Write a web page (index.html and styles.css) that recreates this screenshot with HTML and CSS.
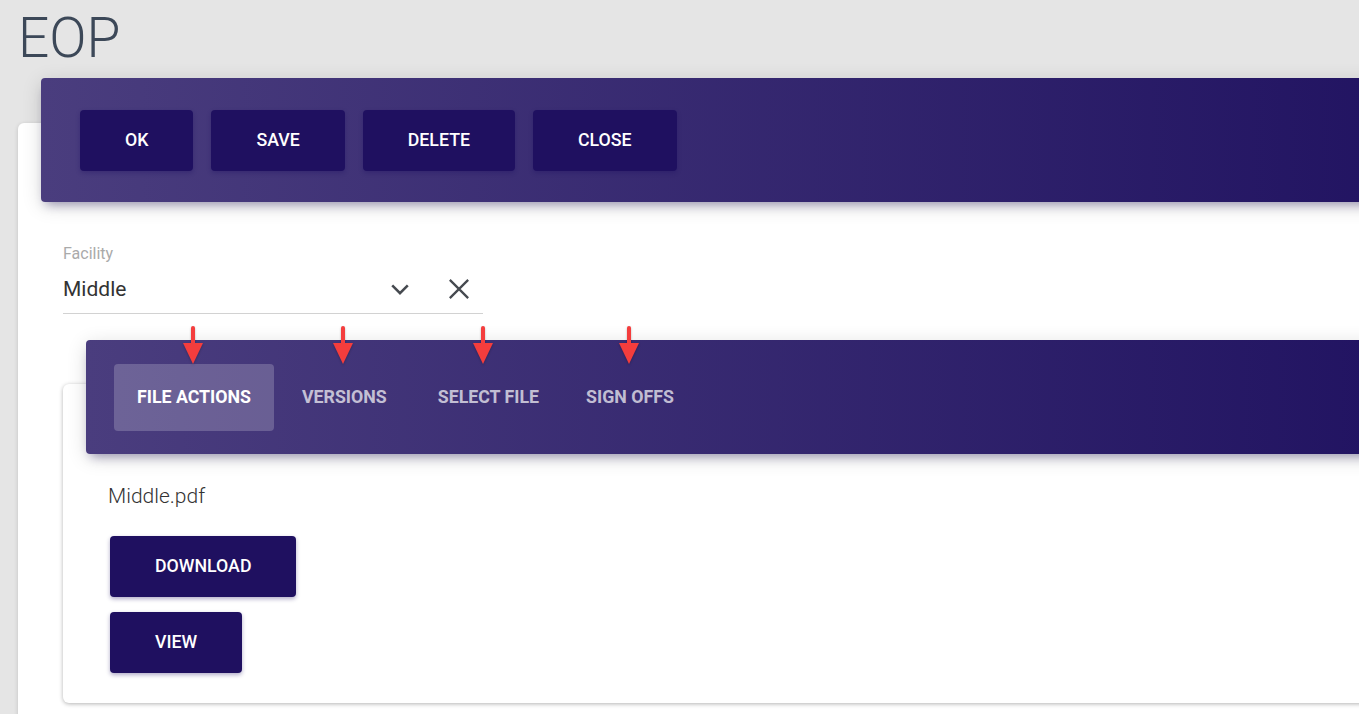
FILE: index.html
```html
<!DOCTYPE html>
<html lang="en">
<head>
  <meta charset="UTF-8" />
  <meta name="viewport" content="width=device-width, initial-scale=1.0" />
  <title>EOP</title>
  <link rel="stylesheet" href="styles.css">
</head>
<body>
  <h1 class="page-title">EOP</h1>

  <div class="panel">
    <div class="panel-header">
      <button class="btn">OK</button>
      <button class="btn">Save</button>
      <button class="btn">Delete</button>
      <button class="btn">Close</button>
    </div>

    <div class="field">
      <label class="field-label">Facility</label>
      <div class="field-row">
        <span class="field-value">Middle</span>
        <svg class="field-icon chevron" viewBox="0 0 24 24" width="24" height="24">
          <polyline points="3.5,8 12,16.5 20.5,8" fill="none" stroke="#464a50" stroke-width="2.8" />
        </svg>
        <svg class="field-icon clear" viewBox="0 0 24 24" width="24" height="24">
          <path d="M2 2 L22 22 M22 2 L2 22" fill="none" stroke="#464a50" stroke-width="2.5" />
        </svg>
      </div>
    </div>

    <div class="subpanel">
      <div class="tabs">
        <div class="tab active">File Actions<span class="arrow"></span></div>
        <div class="tab">Versions<span class="arrow"></span></div>
        <div class="tab">Select File<span class="arrow shift"></span></div>
        <div class="tab last">Sign Offs<span class="arrow"></span></div>
      </div>

      <div class="subpanel-body">
        <p class="file-name">Middle.pdf</p>
        <button class="btn">Download</button>
        <button class="btn">View</button>
      </div>
    </div>
  </div>
</body>
</html>
```

FILE: styles.css
```css
body {
  margin: 0;
  font-family: 'Roboto', 'Liberation Sans', sans-serif;
  background-color: #e5e5e5;
  color: #3c4858;
  overflow: hidden;
}
.page-title {
  margin: 0 0 57px 18px;
  padding-top: 10px;
  font-size: 55px;
  line-height: 56px;
  font-weight: 300;
  color: #3c4858;
}
.panel {
  width: 1420px;
  margin-left: 18px;
  padding: 0 0 40px 45px;
  background: #fff;
  border-radius: 6px;
  box-shadow: 0 1px 4px rgba(0,0,0,0.16);
}
.panel-header {
  display: flex;
  gap: 18px;
  position: relative;
  top: -45px;
  margin: 0 0 -45px -22px;
  padding: 32px 39px 31px;
  background: linear-gradient(to right, #4a3d7e, #1f1160);
  border-radius: 4px;
  box-shadow: 0 4px 20px rgba(0,0,0,0.14), 0 7px 10px -5px rgba(31,17,96,0.4);
}
.btn {
  display: block;
  height: 61px;
  padding: 0 45px 1px;
  background-color: #1f1060;
  color: #fff;
  border: none;
  border-radius: 4px;
  font-family: 'Roboto', sans-serif;
  font-size: 17.75px;
  font-weight: 500;
  text-transform: uppercase;
  box-shadow: 0 2px 4px rgba(31,16,96,0.35);
}
.field {
  width: 420px;
  padding-top: 42px;
}
.field-label {
  display: block;
  font-size: 16px;
  line-height: 19px;
  color: #aaaaaa;
}
.field-row {
  display: flex;
  align-items: center;
  margin-top: 11px;
  padding-bottom: 9px;
  border-bottom: 1px solid #d2d2d2;
}
.field-value {
  flex: 1;
  font-size: 21px;
  line-height: 30px;
  color: #333;
}
.field-icon {
  display: block;
}
.chevron {
  width: 22px;
  height: 22px;
  margin-right: 37px;
}
.clear {
  width: 22px;
  height: 22px;
  margin-right: 13px;
}
.subpanel {
  width: 1400px;
  margin-top: 70px;
  background: #fff;
  border-radius: 6px;
  box-shadow: 0 1px 4px rgba(0,0,0,0.3);
}
.tabs {
  display: flex;
  gap: 5px;
  position: relative;
  top: -44px;
  margin: 0 0 -44px 23px;
  padding: 24px 28px 23px;
  background: linear-gradient(to right, #4a3d7e, #1f1160);
  border-radius: 4px;
  box-shadow: 0 4px 20px rgba(0,0,0,0.14), 0 7px 10px -5px rgba(31,17,96,0.4);
}
.tab {
  position: relative;
  height: 67px;
  line-height: 66px;
  padding: 0 23px;
  border-radius: 4px;
  font-size: 17.75px;
  font-weight: 700;
  text-transform: uppercase;
  color: rgba(255,255,255,0.7);
}
.tab.active {
  background: rgba(255,255,255,0.2);
  color: #fff;
}
.tab.last {
  margin-left: -4px;
}
.arrow {
  position: absolute;
  top: -38px;
  left: 50%;
  width: 22px;
  height: 38px;
  margin-left: -12px;
  filter: drop-shadow(0 1px 1px rgba(0,0,0,0.25));
}
.arrow::before {
  content: '';
  position: absolute;
  left: 9px;
  top: 0;
  width: 4px;
  height: 20px;
  border-radius: 2px;
  background: #f43d3d;
}
.arrow::after {
  content: '';
  position: absolute;
  left: 1px;
  top: 17px;
  border-left: 10px solid transparent;
  border-right: 10px solid transparent;
  border-top: 21px solid #f43d3d;
}
.arrow.shift {
  margin-left: -16px;
}
.subpanel-body {
  padding: 29px 0 30px 45px;
}
.file-name {
  margin: 0 0 27px;
  font-size: 21px;
  line-height: 26px;
  font-weight: 300;
  color: #333;
}
.subpanel-body .btn {
  margin: 0 0 15px 2px;
}
.subpanel-body .btn:last-child {
  margin-bottom: 0;
}
```
